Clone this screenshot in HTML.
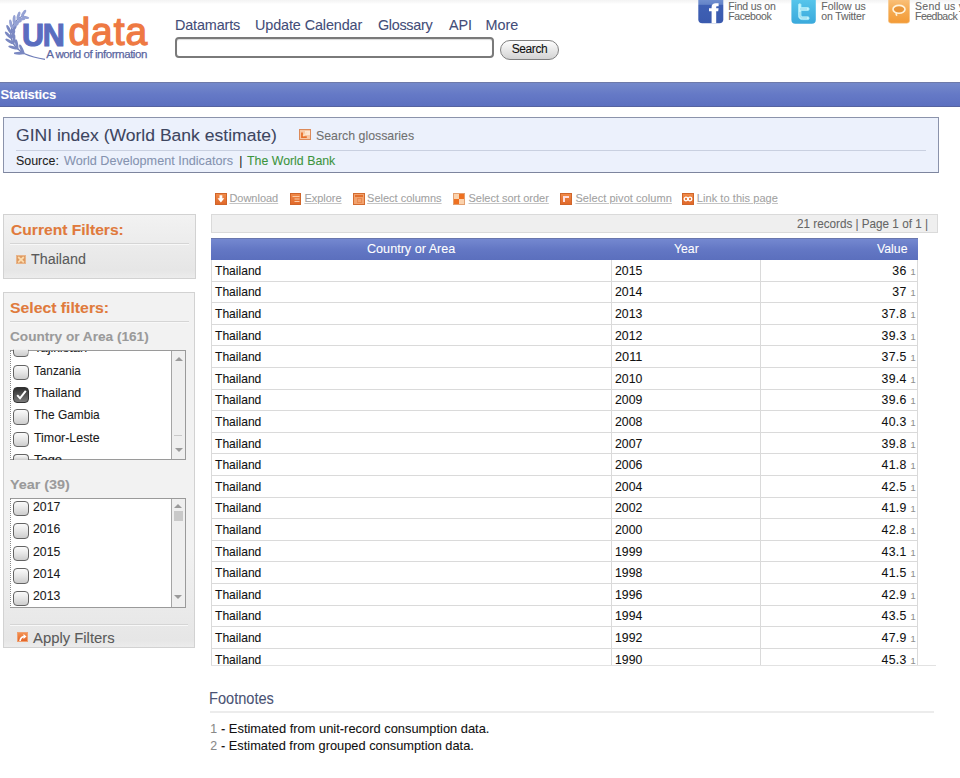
<!DOCTYPE html>
<html><head><meta charset="utf-8">
<style>
*{box-sizing:border-box}
html,body{margin:0;padding:0;width:960px;height:778px;overflow:hidden;background:#fff;font-family:"Liberation Sans",sans-serif;color:#222}
.abs{position:absolute}
.t{position:absolute;line-height:1;white-space:nowrap;-webkit-text-stroke:0.08px currentColor}
.ic{position:absolute;top:193px;width:11.5px;height:11.5px;background:linear-gradient(#f08a48,#e0682a);border:1px solid #d0652a}
.cb{position:absolute;left:12.5px;width:16px;height:15.5px;border:1px solid #646464;border-radius:4px;background:linear-gradient(#fbfbfb,#e6e6e6 50%,#cdcdcd)}
.hl{position:absolute;height:1px;background:#d5d5d5;box-shadow:0 1px 0 #f8f8f8}
.tr{position:absolute;left:211px;width:707px;height:1px;background:#dadada}
.vl{position:absolute;width:1px;background:#dadada}
</style></head><body>

<div class="abs" style="left:0;top:0;width:960px;height:4px;background:linear-gradient(#f3f3f3,#fafafa 70%,#fff)"></div>
<!-- logo -->
<svg class="abs" style="left:0;top:0" width="60" height="66" viewBox="0 0 60 66"><path d="M24 15.5 C10 20 3 41 24 53.5 Q33 57.5 45 59.3" fill="none" stroke="#6f7db8" stroke-width="1.2"/><ellipse cx="25.40" cy="17.36" rx="3.85" ry="1.45" transform="rotate(11.0 25.40 17.36)" fill="#95a2d4"/><ellipse cx="23.68" cy="13.10" rx="3.85" ry="1.45" transform="rotate(-55.0 23.68 13.10)" fill="#95a2d4"/><ellipse cx="21.29" cy="19.11" rx="4.04" ry="1.45" transform="rotate(-4.7 21.29 19.11)" fill="#95a2d4"/><ellipse cx="18.48" cy="15.47" rx="4.04" ry="1.45" transform="rotate(-70.7 18.48 15.47)" fill="#95a2d4"/><ellipse cx="17.78" cy="21.88" rx="4.23" ry="1.45" transform="rotate(-19.8 17.78 21.88)" fill="#95a2d4"/><ellipse cx="14.11" cy="19.10" rx="4.23" ry="1.45" transform="rotate(-85.8 14.11 19.10)" fill="#95a2d4"/><ellipse cx="15.08" cy="25.47" rx="4.42" ry="1.45" transform="rotate(-35.0 15.08 25.47)" fill="#95a2d4"/><ellipse cx="10.82" cy="23.75" rx="4.42" ry="1.45" transform="rotate(-101.0 10.82 23.75)" fill="#95a2d4"/><ellipse cx="13.38" cy="29.67" rx="4.61" ry="1.45" transform="rotate(-50.9 13.38 29.67)" fill="#7a88c2"/><ellipse cx="8.81" cy="29.19" rx="4.61" ry="1.45" transform="rotate(-116.9 8.81 29.19)" fill="#7a88c2"/><ellipse cx="12.88" cy="34.33" rx="4.80" ry="1.45" transform="rotate(-67.7 12.88 34.33)" fill="#7a88c2"/><ellipse cx="8.36" cy="35.18" rx="4.80" ry="1.45" transform="rotate(-133.7 8.36 35.18)" fill="#7a88c2"/><ellipse cx="13.87" cy="39.30" rx="4.99" ry="1.45" transform="rotate(-84.6 13.87 39.30)" fill="#7a88c2"/><ellipse cx="9.79" cy="41.44" rx="4.99" ry="1.45" transform="rotate(-150.6 9.79 41.44)" fill="#7a88c2"/><ellipse cx="16.71" cy="44.41" rx="5.18" ry="1.45" transform="rotate(-100.5 16.71 44.41)" fill="#7a88c2"/><ellipse cx="13.37" cy="47.58" rx="5.18" ry="1.45" transform="rotate(-166.5 13.37 47.58)" fill="#7a88c2"/><ellipse cx="21.76" cy="49.35" rx="5.37" ry="1.45" transform="rotate(-114.2 21.76 49.35)" fill="#7a88c2"/><ellipse cx="19.27" cy="53.22" rx="5.37" ry="1.45" transform="rotate(-180.2 19.27 53.22)" fill="#7a88c2"/></svg>
<div class="t" style="left:22px;top:19.6px;font-size:30.5px;font-weight:bold;color:#5a6dbf;letter-spacing:-1.2px;-webkit-text-stroke:1.1px #5a6dbf">UN</div>
<div class="t" style="left:68.5px;top:11.5px;font-size:39px;color:#ee7942;letter-spacing:0.9px;-webkit-text-stroke:1.3px #ee7942">data</div>
<div class="t" style="left:46.2px;top:48.5px;font-size:11.5px;color:#5b669f;letter-spacing:-0.45px;-webkit-text-stroke:0.25px #5b669f">A world of information</div>

<!-- search -->
<div class="abs" style="left:175px;top:37px;width:318.5px;height:21px;border:2px solid #7a7a7a;border-radius:4px;background:#fff;box-shadow:inset 0 1px 1px rgba(0,0,0,.15)"></div>
<div class="abs" style="left:500px;top:40px;width:59px;height:19.5px;border:1px solid #7f7f7f;border-radius:10px;background:linear-gradient(#fdfdfd,#d3d3d3)"></div>

<!-- social -->
<svg class="abs" style="left:698px;top:0" width="26" height="24" viewBox="0 0 26 24">
 <defs><linearGradient id="fbg" x1="0" y1="0" x2="0" y2="1"><stop offset="0" stop-color="#7d9ad6"/><stop offset="0.33" stop-color="#6584c8"/><stop offset="0.36" stop-color="#3f60b4"/><stop offset="1" stop-color="#3a5aae"/></linearGradient></defs>
 <rect x="0.3" y="-5" width="25" height="28.3" rx="4" fill="url(#fbg)"/>
 <path d="M13.6 23.3 V11.3 H11 V8.3 H13.6 V7 C13.6 4.3 15.1 3.2 17.8 3.2 H20.6 V6.2 H18.8 C18.3 6.2 18.2 6.6 18.2 7.2 V8.3 H20.6 L20.2 11.3 H18.2 V23.3 Z" fill="#fff"/>
</svg>
<svg class="abs" style="left:791px;top:0" width="25" height="24" viewBox="0 0 25 24">
 <defs><linearGradient id="twg" x1="0" y1="0" x2="0" y2="1"><stop offset="0" stop-color="#5ccbef"/><stop offset="0.4" stop-color="#4ebde6"/><stop offset="1" stop-color="#3aa9dc"/></linearGradient></defs>
 <rect x="0.4" y="-5" width="24.4" height="28.7" rx="4" fill="url(#twg)"/>
 <path d="M7.5 4.5 C7.5 3.5 10 3.5 10 4.5 V7.5 H17 C18.5 7.5 18.5 10.5 17 10.5 H10 V15 C10 16.2 10.8 16.8 12 16.8 H17 C18.5 16.8 18.5 19.6 17 19.6 H11.5 C9 19.6 7.5 18 7.5 15.5 Z" fill="#c6f3fc" stroke="#a8ecfa" stroke-width="0.8"/>
 <path d="M9 9 H16 M9 12 V15.5 C9 17 10 18 11.5 18 H16" fill="none" stroke="#8fd5ea" stroke-width="1"/>
</svg>
<svg class="abs" style="left:887.5px;top:0" width="22" height="24" viewBox="0 0 22 24">
 <defs><linearGradient id="feg" x1="0" y1="0" x2="0" y2="1"><stop offset="0" stop-color="#fbc98a"/><stop offset="0.5" stop-color="#f6ad55"/><stop offset="1" stop-color="#f39a35"/></linearGradient></defs>
 <rect x="0.3" y="-5" width="21.4" height="28.3" rx="3" fill="url(#feg)" stroke="#f6d0a0" stroke-width="0.6"/>
 <ellipse cx="11" cy="9.3" rx="6" ry="3.9" fill="#e8953a" stroke="#fff4dc" stroke-width="1.6"/>
 <path d="M8.2 12.6 Q7.6 14.6 9.2 15.6" fill="none" stroke="#fff4dc" stroke-width="1.4"/>
</svg>

<!-- statistics bar -->
<div class="abs" style="left:0;top:82px;width:960px;height:24.5px;background:linear-gradient(#7489cb,#6579c6 50%,#5c70c0);border-top:1px solid #6e7aa9;border-bottom:1px solid #56639f"></div>

<!-- gini box -->
<div class="abs" style="left:3px;top:116.8px;width:935.8px;height:56.4px;border:1px solid #8b93ab;border-bottom-color:#7d859e;background:#ecf1fc"></div>
<div class="abs" style="left:16px;top:149.6px;width:910px;height:1.3px;background:#c9d0e0"></div>
<div class="abs" style="left:299px;top:128.6px;width:11.5px;height:11px;background:#f7c7a4;border:1px solid #dc8a5a">
  <div class="abs" style="left:5px;top:1px;width:4.5px;height:4px;background:#fde6d2"></div>
  <svg class="abs" style="left:0;top:0" width="10" height="9" viewBox="0 0 10 9"><path d="M2 2.5 L2 7.2 L6.8 7.2" fill="none" stroke="#e8702a" stroke-width="1.8"/><path d="M3.2 6 L7 2.2" stroke="#fbe0c0" stroke-width="1.5"/></svg>
</div>

<!-- current filters box -->
<div class="abs" style="left:3px;top:213.7px;width:192.8px;height:65.5px;border:1px solid #d2d2d2;background:linear-gradient(#f2f2f2,#e6e6e6 88%,#ececec)"></div>
<div class="hl" style="left:9.5px;top:242.5px;width:179px"></div>
<div class="abs" style="left:16.2px;top:254.8px;width:10px;height:9.4px;background:#dd9a62;border:1px solid #e8b48a">
  <svg class="abs" style="left:0;top:0" width="8" height="7.4" viewBox="0 0 8 7.4"><path d="M1.2 1 L6.8 6.4 M6.8 1 L1.2 6.4" stroke="#fcdcae" stroke-width="1.8"/></svg>
</div>

<!-- select filters box -->
<div class="abs" style="left:3px;top:292.2px;width:192.2px;height:356.3px;border:1px solid #d2d2d2;background:linear-gradient(#f2f2f2,#f2f2f2 72%,#e6e6e6 98%,#ececec)"></div>
<div class="hl" style="left:9.5px;top:321px;width:179px"></div>
<!-- country list -->
<div class="abs" style="left:10.3px;top:349.5px;width:175.6px;height:110.8px;border:1px solid #9a9a9a;border-left:1px dotted #8a8a8a;background:#fff;overflow:hidden">
  <div class="abs" style="left:160px;top:0;width:14.5px;height:109px;border-left:1px solid #a5a5a5;background:#efefef"></div>
  <svg class="abs" style="left:163.5px;top:5px" width="8" height="5"><path d="M0 5 L4 1 L8 5 Z" fill="#9a9a9a"/></svg>
  <div class="abs" style="left:163px;top:84.5px;width:8px;height:1px;background:#c9c9c9"></div>
  <svg class="abs" style="left:163.5px;top:97px" width="8" height="5"><path d="M0 0 L4 4 L8 0 Z" fill="#9a9a9a"/></svg>
</div>
<div class="cb" style="top:341.8px;clip-path:inset(8px 0 0 0)"></div>
<div class="cb" style="top:364.7px"></div>
<div class="cb" style="top:387px;background:linear-gradient(#2e2e2e,#7a7a7a);border-color:#333">
  <svg class="abs" style="left:1px;top:1px" width="13" height="12" viewBox="0 0 13 12"><path d="M2.2 6.2 L5 9.3 L10.8 1.8" fill="none" stroke="#fff" stroke-width="2"/></svg>
</div>
<div class="cb" style="top:409.4px"></div>
<div class="cb" style="top:431.7px"></div>
<div class="cb" style="top:454.2px;height:6px;border-bottom:none;border-radius:4px 4px 0 0"></div>
<!-- year list -->
<div class="abs" style="left:9.8px;top:497.5px;width:176.2px;height:110.8px;border:1px solid #9a9a9a;border-left:1px dotted #8a8a8a;background:#fff;overflow:hidden">
  <div class="abs" style="left:160.2px;top:0;width:15px;height:109px;border-left:1px solid #a5a5a5;background:#efefef"></div>
  <svg class="abs" style="left:163.5px;top:4px" width="8" height="5"><path d="M0 5 L4 1 L8 5 Z" fill="#9a9a9a"/></svg>
  <div class="abs" style="left:163px;top:12.5px;width:9.5px;height:9.5px;background:#c9c9c9"></div>
  <svg class="abs" style="left:163.5px;top:96.5px" width="8" height="5"><path d="M0 0 L4 4 L8 0 Z" fill="#9a9a9a"/></svg>
</div>
<div class="cb" style="top:500.7px"></div>
<div class="cb" style="top:523px"></div>
<div class="cb" style="top:545.9px"></div>
<div class="cb" style="top:568.3px"></div>
<div class="cb" style="top:590.9px"></div>
<div class="hl" style="left:9.5px;top:624px;width:178px"></div>
<div class="abs" style="left:16.7px;top:631.7px;width:11.3px;height:10.8px;background:linear-gradient(#f39050,#e2652a);border:1px solid #f0a070">
  <svg class="abs" style="left:0;top:0" width="10" height="9" viewBox="0 0 10 9"><path d="M2 8 Q2.5 3.5 7 3.5" fill="none" stroke="#fff" stroke-width="1.6"/><path d="M5.5 1 L8.5 3.5 L5.5 6 Z" fill="#fff"/></svg>
</div>

<!-- toolbar icons -->
<div class="ic" style="left:215px"><svg class="abs" style="left:0;top:0" width="10" height="10" viewBox="0 0 10 10"><path d="M3.5 1.2 H6.3 V4.3 H8.3 L4.9 8.6 L1.5 4.3 H3.5 Z" fill="#fff"/></svg></div>
<div class="ic" style="left:289.7px"><svg class="abs" style="left:0;top:0" width="10" height="10" viewBox="0 0 10 10"><path d="M1.5 2.5 H8.5 M3.5 5 H8.5 M3.5 7.5 H8.5" stroke="#fcc9a4" stroke-width="1.2"/></svg></div>
<div class="ic" style="left:353.2px;background:#f2a26e;border-color:#d36c30"><div class="abs" style="left:1px;top:1px;width:7.5px;height:1.8px;background:#e2702e"></div><div class="abs" style="left:2.5px;top:3.5px;width:5px;height:5px;border:1px solid #e88a50"></div></div>
<div class="ic" style="left:453.4px;background:#fbd2ac;border-color:#e3a070"><div class="abs" style="left:4.5px;top:0;width:5px;height:4.5px;background:#ee7020"></div><div class="abs" style="left:0;top:4.5px;width:4.5px;height:5px;background:#ee7020"></div></div>
<div class="ic" style="left:560.3px"><div class="abs" style="left:2px;top:2px;width:6px;height:1.6px;background:#fdd"></div><div class="abs" style="left:2px;top:2px;width:1.6px;height:6px;background:#fdd"></div></div>
<div class="ic" style="left:682px"><svg class="abs" style="left:0;top:0" width="10" height="10" viewBox="0 0 10 10"><circle cx="3" cy="5" r="1.8" fill="none" stroke="#fff" stroke-width="1.3"/><circle cx="7" cy="5" r="1.8" fill="none" stroke="#fff" stroke-width="1.3"/></svg></div>

<!-- records bar -->
<div class="abs" style="left:211px;top:213.7px;width:726.5px;height:19.8px;border:1px solid #dadada;background:#efefef"></div>

<!-- table -->
<div class="abs" style="left:211px;top:237.5px;width:707px;height:22px;background:linear-gradient(#7488d0,#6377c4 50%,#5b6fbd);border-top:1px solid #6a77ad"></div>
<div class="vl" style="left:211px;top:259.5px;height:405.5px"></div>
<div class="vl" style="left:610.8px;top:259.5px;height:405.5px"></div>
<div class="vl" style="left:759.8px;top:259.5px;height:405.5px"></div>
<div class="vl" style="left:917px;top:259.5px;height:405.5px"></div>
<div class="tr" style="top:280.6px"></div>
<div class="tr" style="top:302.2px"></div>
<div class="tr" style="top:323.8px"></div>
<div class="tr" style="top:345.4px"></div>
<div class="tr" style="top:367.0px"></div>
<div class="tr" style="top:388.6px"></div>
<div class="tr" style="top:410.2px"></div>
<div class="tr" style="top:431.8px"></div>
<div class="tr" style="top:453.4px"></div>
<div class="tr" style="top:475.0px"></div>
<div class="tr" style="top:496.6px"></div>
<div class="tr" style="top:518.2px"></div>
<div class="tr" style="top:539.8px"></div>
<div class="tr" style="top:561.4px"></div>
<div class="tr" style="top:583.0px"></div>
<div class="tr" style="top:604.6px"></div>
<div class="tr" style="top:626.2px"></div>
<div class="tr" style="top:647.8px"></div>

<div class="abs" style="left:211px;top:665px;width:725px;height:1px;background:#e2e2e2"></div>

<!-- footnotes -->
<div class="abs" style="left:210px;top:711px;width:724px;height:1.5px;background:#ececec"></div>

<div class="t" style="left:175.00px;top:17.50px;font-size:14.4px;color:#434d78;letter-spacing:-0.147px;">Datamarts</div>
<div class="t" style="left:255.00px;top:17.50px;font-size:14.4px;color:#434d78;letter-spacing:-0.108px;">Update Calendar</div>
<div class="t" style="left:377.90px;top:17.50px;font-size:14.4px;color:#434d78;letter-spacing:-0.297px;">Glossary</div>
<div class="t" style="left:449.00px;top:17.50px;font-size:14.4px;color:#434d78;letter-spacing:-0.098px;">API</div>
<div class="t" style="left:485.60px;top:17.50px;font-size:14.4px;color:#434d78;letter-spacing:-0.028px;">More</div>
<div class="t" style="left:511.80px;top:43.00px;font-size:12px;color:#111;letter-spacing:-0.430px;">Search</div>
<div class="t" style="left:728.20px;top:0.90px;font-size:10.5px;color:#666;letter-spacing:-0.154px;">Find us on</div>
<div class="t" style="left:728.20px;top:10.70px;font-size:10.5px;color:#666;letter-spacing:-0.380px;">Facebook</div>
<div class="t" style="left:821.30px;top:0.90px;font-size:10.5px;color:#666;letter-spacing:0.013px;">Follow us</div>
<div class="t" style="left:821.30px;top:10.70px;font-size:10.5px;color:#666;letter-spacing:-0.147px;">on Twitter</div>
<div class="t" style="left:915.00px;top:0.90px;font-size:10.5px;color:#666;letter-spacing:0.3px;">Send us your</div>
<div class="t" style="left:915.00px;top:10.70px;font-size:10.5px;color:#666;letter-spacing:-0.495px;">Feedback</div>
<div class="t" style="left:0.50px;top:87.75px;font-size:13px;font-weight:bold;color:#fff;letter-spacing:-0.230px;">Statistics</div>
<div class="t" style="left:15.80px;top:127.00px;font-size:17.22px;color:#3d455f;transform:scaleX(1.0193);transform-origin:0 0;">GINI index (World Bank estimate)</div>
<div class="t" style="left:316.25px;top:130.30px;font-size:12.81px;color:#707070;transform:scaleX(0.9648);transform-origin:0 0;">Search glossaries</div>
<div class="t" style="left:15.80px;top:156.10px;font-size:11.97px;color:#222;transform:scaleX(1.0385);transform-origin:0 0;">Source:</div>
<div class="t" style="left:64.00px;top:156.10px;font-size:11.97px;color:#8593b0;transform:scaleX(1.0555);transform-origin:0 0;">World Development Indicators</div>
<div class="t" style="left:239.30px;top:156.10px;font-size:11.97px;color:#222;">|</div>
<div class="t" style="left:246.70px;top:156.10px;font-size:11.97px;color:#3c943c;transform:scaleX(1.0314);transform-origin:0 0;">The World Bank</div>
<div class="t" style="left:10.80px;top:224.00px;font-size:13.86px;font-weight:bold;color:#e07a3c;transform:scaleX(1.1267);transform-origin:0 0;">Current Filters:</div>
<div class="t" style="left:31.25px;top:251.75px;font-size:14.7px;color:#5a5a5a;transform:scaleX(0.9747);transform-origin:0 0;">Thailand</div>
<div class="t" style="left:10.40px;top:302.40px;font-size:13.86px;font-weight:bold;color:#e07a3c;transform:scaleX(1.1380);transform-origin:0 0;">Select filters:</div>
<div class="t" style="left:10.00px;top:331.10px;font-size:12.6px;font-weight:bold;color:#9a9a9a;transform:scaleX(1.0811);transform-origin:0 0;">Country or Area (161)</div>
<div class="t" style="left:33.50px;top:364.60px;font-size:12.18px;color:#1a1a1a;transform:scaleX(0.9621);transform-origin:0 0;">Tanzania</div>
<div class="t" style="left:33.50px;top:386.90px;font-size:12.18px;color:#1a1a1a;transform:scaleX(1.0082);transform-origin:0 0;">Thailand</div>
<div class="t" style="left:33.50px;top:409.20px;font-size:12.18px;color:#1a1a1a;transform:scaleX(0.9806);transform-origin:0 0;">The Gambia</div>
<div class="t" style="left:33.50px;top:431.50px;font-size:12.18px;color:#1a1a1a;transform:scaleX(1.0184);transform-origin:0 0;">Timor-Leste</div>
<div class="abs" style="left:11px;top:350.5px;width:160px;height:109px;overflow:hidden"><div class="t" style="left:22.50px;top:-8.20px;font-size:12.18px;color:#1a1a1a;transform:scaleX(1.06);transform-origin:0 0;">Tajikistan</div></div>
<div class="abs" style="left:11px;top:350.5px;width:160px;height:109px;overflow:hidden"><div class="t" style="left:22.50px;top:103.30px;font-size:12.18px;color:#1a1a1a;transform:scaleX(1.06);transform-origin:0 0;">Togo</div></div>
<div class="t" style="left:10.20px;top:478.60px;font-size:12.6px;font-weight:bold;color:#9a9a9a;transform:scaleX(1.1393);transform-origin:0 0;">Year (39)</div>
<div class="t" style="left:33.00px;top:501.00px;font-size:12.18px;color:#1a1a1a;transform:scaleX(1.0070);transform-origin:0 0;">2017</div>
<div class="t" style="left:33.00px;top:523.30px;font-size:12.18px;color:#1a1a1a;transform:scaleX(1.0070);transform-origin:0 0;">2016</div>
<div class="t" style="left:33.00px;top:545.60px;font-size:12.18px;color:#1a1a1a;transform:scaleX(1.0070);transform-origin:0 0;">2015</div>
<div class="t" style="left:33.00px;top:567.90px;font-size:12.18px;color:#1a1a1a;transform:scaleX(1.0070);transform-origin:0 0;">2014</div>
<div class="t" style="left:33.00px;top:590.20px;font-size:12.18px;color:#1a1a1a;transform:scaleX(1.0070);transform-origin:0 0;">2013</div>
<div class="t" style="left:33.30px;top:631.10px;font-size:14.7px;color:#5a5a5a;transform:scaleX(1.0105);transform-origin:0 0;">Apply Filters</div>
<div class="t" style="left:229.40px;top:193.00px;font-size:11px;color:#a2a2a2;text-decoration:underline;text-decoration-color:#c4c4c4;letter-spacing:-0.015px;">Download</div>
<div class="t" style="left:304.40px;top:193.00px;font-size:11px;color:#a2a2a2;text-decoration:underline;text-decoration-color:#c4c4c4;letter-spacing:-0.013px;">Explore</div>
<div class="t" style="left:367.10px;top:193.00px;font-size:11px;color:#a2a2a2;text-decoration:underline;text-decoration-color:#c4c4c4;letter-spacing:-0.007px;">Select columns</div>
<div class="t" style="left:468.50px;top:193.00px;font-size:11px;color:#a2a2a2;text-decoration:underline;text-decoration-color:#c4c4c4;letter-spacing:-0.021px;">Select sort order</div>
<div class="t" style="left:575.40px;top:193.00px;font-size:11px;color:#a2a2a2;text-decoration:underline;text-decoration-color:#c4c4c4;letter-spacing:0.058px;">Select pivot column</div>
<div class="t" style="left:696.80px;top:193.00px;font-size:11px;color:#a2a2a2;text-decoration:underline;text-decoration-color:#c4c4c4;letter-spacing:0.063px;">Link to this page</div>
<div class="t" style="left:796.70px;top:218.30px;font-size:12.08px;color:#666;transform:scaleX(0.9685);transform-origin:0 0;">21 records | Page 1 of 1 |</div>
<div class="t" style="left:367.00px;top:242.80px;font-size:12.6px;color:#fff;transform:scaleX(1.0012);transform-origin:0 0;">Country or Area</div>
<div class="t" style="left:673.75px;top:242.80px;font-size:12.6px;color:#fff;transform:scaleX(0.9722);transform-origin:0 0;">Year</div>
<div class="t" style="left:877.00px;top:242.80px;font-size:12.6px;color:#fff;transform:scaleX(0.9754);transform-origin:0 0;">Value</div>
<div class="t" style="left:215.00px;top:264.75px;font-size:12.29px;color:#111;transform:scaleX(0.9835);transform-origin:0 0;">Thailand</div>
<div class="t" style="left:614.80px;top:264.75px;font-size:12.29px;color:#111;transform:scaleX(1.0003);transform-origin:0 0;">2015</div>
<div class="t" style="left:892.37px;top:264.75px;font-size:12.29px;color:#111;letter-spacing:0.3px;">36</div>
<div class="t" style="left:910.40px;top:267.75px;font-size:9.3px;color:#8e8e8e;font-family:"Liberation Serif",serif;">1</div>
<div class="t" style="left:215.00px;top:286.35px;font-size:12.29px;color:#111;transform:scaleX(0.9835);transform-origin:0 0;">Thailand</div>
<div class="t" style="left:614.80px;top:286.35px;font-size:12.29px;color:#111;transform:scaleX(1.0003);transform-origin:0 0;">2014</div>
<div class="t" style="left:892.37px;top:286.35px;font-size:12.29px;color:#111;letter-spacing:0.3px;">37</div>
<div class="t" style="left:910.40px;top:289.35px;font-size:9.3px;color:#8e8e8e;font-family:"Liberation Serif",serif;">1</div>
<div class="t" style="left:215.00px;top:307.95px;font-size:12.29px;color:#111;transform:scaleX(0.9835);transform-origin:0 0;">Thailand</div>
<div class="t" style="left:614.80px;top:307.95px;font-size:12.29px;color:#111;transform:scaleX(1.0003);transform-origin:0 0;">2013</div>
<div class="t" style="left:881.53px;top:307.95px;font-size:12.29px;color:#111;letter-spacing:0.3px;">37.8</div>
<div class="t" style="left:910.40px;top:310.95px;font-size:9.3px;color:#8e8e8e;font-family:"Liberation Serif",serif;">1</div>
<div class="t" style="left:215.00px;top:329.55px;font-size:12.29px;color:#111;transform:scaleX(0.9835);transform-origin:0 0;">Thailand</div>
<div class="t" style="left:614.80px;top:329.55px;font-size:12.29px;color:#111;transform:scaleX(1.0003);transform-origin:0 0;">2012</div>
<div class="t" style="left:881.53px;top:329.55px;font-size:12.29px;color:#111;letter-spacing:0.3px;">39.3</div>
<div class="t" style="left:910.40px;top:332.55px;font-size:9.3px;color:#8e8e8e;font-family:"Liberation Serif",serif;">1</div>
<div class="t" style="left:215.00px;top:351.15px;font-size:12.29px;color:#111;transform:scaleX(0.9835);transform-origin:0 0;">Thailand</div>
<div class="t" style="left:614.80px;top:351.15px;font-size:12.29px;color:#111;transform:scaleX(1.0347);transform-origin:0 0;">2011</div>
<div class="t" style="left:881.53px;top:351.15px;font-size:12.29px;color:#111;letter-spacing:0.3px;">37.5</div>
<div class="t" style="left:910.40px;top:354.15px;font-size:9.3px;color:#8e8e8e;font-family:"Liberation Serif",serif;">1</div>
<div class="t" style="left:215.00px;top:372.75px;font-size:12.29px;color:#111;transform:scaleX(0.9835);transform-origin:0 0;">Thailand</div>
<div class="t" style="left:614.80px;top:372.75px;font-size:12.29px;color:#111;transform:scaleX(1.0003);transform-origin:0 0;">2010</div>
<div class="t" style="left:881.53px;top:372.75px;font-size:12.29px;color:#111;letter-spacing:0.3px;">39.4</div>
<div class="t" style="left:910.40px;top:375.75px;font-size:9.3px;color:#8e8e8e;font-family:"Liberation Serif",serif;">1</div>
<div class="t" style="left:215.00px;top:394.35px;font-size:12.29px;color:#111;transform:scaleX(0.9835);transform-origin:0 0;">Thailand</div>
<div class="t" style="left:614.80px;top:394.35px;font-size:12.29px;color:#111;transform:scaleX(1.0003);transform-origin:0 0;">2009</div>
<div class="t" style="left:881.53px;top:394.35px;font-size:12.29px;color:#111;letter-spacing:0.3px;">39.6</div>
<div class="t" style="left:910.40px;top:397.35px;font-size:9.3px;color:#8e8e8e;font-family:"Liberation Serif",serif;">1</div>
<div class="t" style="left:215.00px;top:415.95px;font-size:12.29px;color:#111;transform:scaleX(0.9835);transform-origin:0 0;">Thailand</div>
<div class="t" style="left:614.80px;top:415.95px;font-size:12.29px;color:#111;transform:scaleX(1.0003);transform-origin:0 0;">2008</div>
<div class="t" style="left:881.53px;top:415.95px;font-size:12.29px;color:#111;letter-spacing:0.3px;">40.3</div>
<div class="t" style="left:910.40px;top:418.95px;font-size:9.3px;color:#8e8e8e;font-family:"Liberation Serif",serif;">1</div>
<div class="t" style="left:215.00px;top:437.55px;font-size:12.29px;color:#111;transform:scaleX(0.9835);transform-origin:0 0;">Thailand</div>
<div class="t" style="left:614.80px;top:437.55px;font-size:12.29px;color:#111;transform:scaleX(1.0003);transform-origin:0 0;">2007</div>
<div class="t" style="left:881.53px;top:437.55px;font-size:12.29px;color:#111;letter-spacing:0.3px;">39.8</div>
<div class="t" style="left:910.40px;top:440.55px;font-size:9.3px;color:#8e8e8e;font-family:"Liberation Serif",serif;">1</div>
<div class="t" style="left:215.00px;top:459.15px;font-size:12.29px;color:#111;transform:scaleX(0.9835);transform-origin:0 0;">Thailand</div>
<div class="t" style="left:614.80px;top:459.15px;font-size:12.29px;color:#111;transform:scaleX(1.0003);transform-origin:0 0;">2006</div>
<div class="t" style="left:881.53px;top:459.15px;font-size:12.29px;color:#111;letter-spacing:0.3px;">41.8</div>
<div class="t" style="left:910.40px;top:462.15px;font-size:9.3px;color:#8e8e8e;font-family:"Liberation Serif",serif;">1</div>
<div class="t" style="left:215.00px;top:480.75px;font-size:12.29px;color:#111;transform:scaleX(0.9835);transform-origin:0 0;">Thailand</div>
<div class="t" style="left:614.80px;top:480.75px;font-size:12.29px;color:#111;transform:scaleX(1.0003);transform-origin:0 0;">2004</div>
<div class="t" style="left:881.53px;top:480.75px;font-size:12.29px;color:#111;letter-spacing:0.3px;">42.5</div>
<div class="t" style="left:910.40px;top:483.75px;font-size:9.3px;color:#8e8e8e;font-family:"Liberation Serif",serif;">1</div>
<div class="t" style="left:215.00px;top:502.35px;font-size:12.29px;color:#111;transform:scaleX(0.9835);transform-origin:0 0;">Thailand</div>
<div class="t" style="left:614.80px;top:502.35px;font-size:12.29px;color:#111;transform:scaleX(1.0003);transform-origin:0 0;">2002</div>
<div class="t" style="left:881.53px;top:502.35px;font-size:12.29px;color:#111;letter-spacing:0.3px;">41.9</div>
<div class="t" style="left:910.40px;top:505.35px;font-size:9.3px;color:#8e8e8e;font-family:"Liberation Serif",serif;">1</div>
<div class="t" style="left:215.00px;top:523.95px;font-size:12.29px;color:#111;transform:scaleX(0.9835);transform-origin:0 0;">Thailand</div>
<div class="t" style="left:614.80px;top:523.95px;font-size:12.29px;color:#111;transform:scaleX(1.0003);transform-origin:0 0;">2000</div>
<div class="t" style="left:881.53px;top:523.95px;font-size:12.29px;color:#111;letter-spacing:0.3px;">42.8</div>
<div class="t" style="left:910.40px;top:526.95px;font-size:9.3px;color:#8e8e8e;font-family:"Liberation Serif",serif;">1</div>
<div class="t" style="left:215.00px;top:545.55px;font-size:12.29px;color:#111;transform:scaleX(0.9835);transform-origin:0 0;">Thailand</div>
<div class="t" style="left:614.80px;top:545.55px;font-size:12.29px;color:#111;transform:scaleX(1.0003);transform-origin:0 0;">1999</div>
<div class="t" style="left:881.53px;top:545.55px;font-size:12.29px;color:#111;letter-spacing:0.3px;">43.1</div>
<div class="t" style="left:910.40px;top:548.55px;font-size:9.3px;color:#8e8e8e;font-family:"Liberation Serif",serif;">1</div>
<div class="t" style="left:215.00px;top:567.15px;font-size:12.29px;color:#111;transform:scaleX(0.9835);transform-origin:0 0;">Thailand</div>
<div class="t" style="left:614.80px;top:567.15px;font-size:12.29px;color:#111;transform:scaleX(1.0003);transform-origin:0 0;">1998</div>
<div class="t" style="left:881.53px;top:567.15px;font-size:12.29px;color:#111;letter-spacing:0.3px;">41.5</div>
<div class="t" style="left:910.40px;top:570.15px;font-size:9.3px;color:#8e8e8e;font-family:"Liberation Serif",serif;">1</div>
<div class="t" style="left:215.00px;top:588.75px;font-size:12.29px;color:#111;transform:scaleX(0.9835);transform-origin:0 0;">Thailand</div>
<div class="t" style="left:614.80px;top:588.75px;font-size:12.29px;color:#111;transform:scaleX(1.0003);transform-origin:0 0;">1996</div>
<div class="t" style="left:881.53px;top:588.75px;font-size:12.29px;color:#111;letter-spacing:0.3px;">42.9</div>
<div class="t" style="left:910.40px;top:591.75px;font-size:9.3px;color:#8e8e8e;font-family:"Liberation Serif",serif;">1</div>
<div class="t" style="left:215.00px;top:610.35px;font-size:12.29px;color:#111;transform:scaleX(0.9835);transform-origin:0 0;">Thailand</div>
<div class="t" style="left:614.80px;top:610.35px;font-size:12.29px;color:#111;transform:scaleX(1.0003);transform-origin:0 0;">1994</div>
<div class="t" style="left:881.53px;top:610.35px;font-size:12.29px;color:#111;letter-spacing:0.3px;">43.5</div>
<div class="t" style="left:910.40px;top:613.35px;font-size:9.3px;color:#8e8e8e;font-family:"Liberation Serif",serif;">1</div>
<div class="t" style="left:215.00px;top:631.95px;font-size:12.29px;color:#111;transform:scaleX(0.9835);transform-origin:0 0;">Thailand</div>
<div class="t" style="left:614.80px;top:631.95px;font-size:12.29px;color:#111;transform:scaleX(1.0003);transform-origin:0 0;">1992</div>
<div class="t" style="left:881.53px;top:631.95px;font-size:12.29px;color:#111;letter-spacing:0.3px;">47.9</div>
<div class="t" style="left:910.40px;top:634.95px;font-size:9.3px;color:#8e8e8e;font-family:"Liberation Serif",serif;">1</div>
<div class="t" style="left:215.00px;top:653.55px;font-size:12.29px;color:#111;transform:scaleX(0.9835);transform-origin:0 0;">Thailand</div>
<div class="t" style="left:614.80px;top:653.55px;font-size:12.29px;color:#111;transform:scaleX(1.0003);transform-origin:0 0;">1990</div>
<div class="t" style="left:881.53px;top:653.55px;font-size:12.29px;color:#111;letter-spacing:0.3px;">45.3</div>
<div class="t" style="left:910.40px;top:656.55px;font-size:9.3px;color:#8e8e8e;font-family:"Liberation Serif",serif;">1</div>
<div class="t" style="left:209.37px;top:691.00px;font-size:15.75px;color:#4b5375;transform:scaleX(0.9267);transform-origin:0 0;">Footnotes</div>
<div class="t" style="left:210.30px;top:723.10px;font-size:12.29px;color:#888;">1</div>
<div class="t" style="left:221.00px;top:723.10px;font-size:12.29px;color:#111;transform:scaleX(1.0487);transform-origin:0 0;">- Estimated from unit-record consumption data.</div>
<div class="t" style="left:210.30px;top:740.30px;font-size:12.29px;color:#888;">2</div>
<div class="t" style="left:221.00px;top:740.30px;font-size:12.29px;color:#111;transform:scaleX(1.0433);transform-origin:0 0;">- Estimated from grouped consumption data.</div>
</body></html>
